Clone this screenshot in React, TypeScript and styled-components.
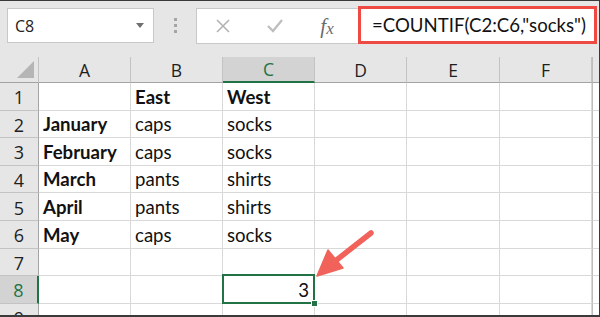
import React from "react";
import styled, { createGlobalStyle } from "styled-components";

const GREEN = "#217346";

const columns = ["A", "B", "C", "D", "E", "F"];

const rows: { a?: string; b?: string; c?: string }[] = [
  { b: "East", c: "West" },
  { a: "January", b: "caps", c: "socks" },
  { a: "February", b: "caps", c: "socks" },
  { a: "March", b: "pants", c: "shirts" },
  { a: "April", b: "pants", c: "shirts" },
  { a: "May", b: "caps", c: "socks" },
  {},
  { c: "3" },
  {},
];

const App = () => {
  return (
    <Window>
      <GlobalStyle />
      <FormulaBar>
        <NameBox>
          <span>C8</span>
          <Caret />
        </NameBox>
        <Dots>
          <i />
          <i />
          <i />
        </Dots>
        <FormulaBox>
          <IconSlot>
            <svg width="14" height="14" viewBox="0 0 14 14">
              <path d="M1 1 L13 13 M13 1 L1 13" stroke="#b3b3b3" strokeWidth="1.6" fill="none" />
            </svg>
          </IconSlot>
          <IconSlot>
            <svg width="16" height="14" viewBox="0 0 16 14">
              <path d="M1 7 L6 12 L15 1" stroke="#bdbdbd" strokeWidth="2.2" fill="none" />
            </svg>
          </IconSlot>
          <IconSlot>
            <Fx>
              f<sub>x</sub>
            </Fx>
          </IconSlot>
          <FormulaInput>=COUNTIF(C2:C6,"socks")</FormulaInput>
        </FormulaBox>
      </FormulaBar>

      <Sheet>
        <Corner />
        {columns.map((c) => (
          <ColHeader key={c} $active={c === "C"}>
            {c}
          </ColHeader>
        ))}
        <Filler $head />

        {rows.map((r, i) => {
          const n = i + 1;
          return (
            <React.Fragment key={n}>
              <RowHeader $active={n === 8}>{n}</RowHeader>
              <Cell $bold>{r.a}</Cell>
              <Cell $bold={n === 1}>{r.b}</Cell>
              <Cell $bold={n === 1} $right={n === 8} $selected={n === 8}>
                {r.c}
              </Cell>
              <Cell />
              <Cell />
              <Cell />
              <Filler />
            </React.Fragment>
          );
        })}
      </Sheet>

      <Arrow viewBox="0 0 600 317" width="600" height="317">
        <line x1="371" y1="233" x2="334" y2="262" stroke="#f1635a" strokeWidth="5.5" strokeLinecap="round" />
        <polygon points="317,276 328,250 343,268" fill="#f1635a" stroke="#f1635a" strokeWidth="1.5" strokeLinejoin="round" />
      </Arrow>
    </Window>
  );
};

export default App;

const GlobalStyle = createGlobalStyle`
  html, body {
    margin: 0;
    padding: 0;
    background: #fff;
  }
`;

const Window = styled.div`
  position: relative;
  width: 600px;
  height: 317px;
  box-sizing: border-box;
  overflow: hidden;
  background: #e6e6e6;
  border-top: 1px solid #3a3a3a;
  border-right: 1px solid #3a3a3a;
  border-bottom: 2px solid #3a3a3a;
  font-family: "Open Sans", "Noto Sans", sans-serif;
`;

const FormulaBar = styled.div`
  display: flex;
  align-items: flex-start;
  height: 56px;
  padding: 7px 2px 0 7px;
  box-sizing: border-box;
`;

const NameBox = styled.div`
  display: flex;
  align-items: center;
  justify-content: space-between;
  width: 147px;
  height: 35px;
  box-sizing: border-box;
  padding: 0 9px 0 7px;
  background: #fff;
  border: 1px solid #c8c8c8;
  font-size: 16px;
  color: #222;
`;

const Caret = styled.div`
  width: 0;
  height: 0;
  border-left: 4px solid transparent;
  border-right: 4px solid transparent;
  border-top: 5px solid #6f6f6f;
`;

const Dots = styled.div`
  display: flex;
  flex-direction: column;
  align-items: center;
  gap: 3px;
  width: 42px;
  padding-top: 10px;

  i {
    display: block;
    width: 3px;
    height: 3px;
    background: #a5a5a5;
  }
`;

const FormulaBox = styled.div`
  flex: 1;
  display: flex;
  align-items: stretch;
  height: 36px;
  box-sizing: border-box;
  background: #fff;
  border: 1px solid #c8c8c8;
`;

const IconSlot = styled.div`
  display: flex;
  align-items: center;
  justify-content: center;
  width: 52px;
`;

const Fx = styled.span`
  font-family: "Liberation Serif", serif;
  font-style: italic;
  font-size: 21px;
  color: #6b6b6b;
  line-height: 1;

  sub {
    font-size: 17px;
    vertical-align: -1px;
  }
`;

const FormulaInput = styled.div`
  flex: 1;
  display: flex;
  align-items: center;
  margin: -3px -1px -1px 5px;
  padding-left: 11px;
  border: 3px solid #ee4a43;
  font-family: "Lato", sans-serif;
  font-size: 18.6px;
  color: #111;
  white-space: nowrap;
`;

const Sheet = styled.div`
  display: grid;
  grid-template-columns: 39px 92px 92px 92px 92px 93px 92px 1fr;
  grid-template-rows: 26px repeat(9, 27.6px);
`;

const Corner = styled.div`
  position: relative;
  border-right: 1px solid #c3c3c3;
  border-bottom: 1px solid #a3a3a3;

  &::after {
    content: "";
    position: absolute;
    right: 4px;
    bottom: 4px;
    width: 0;
    height: 0;
    border-left: 17px solid transparent;
    border-bottom: 17px solid #b5b5b5;
  }
`;

const ColHeader = styled.div<{ $active?: boolean }>`
  display: flex;
  align-items: center;
  justify-content: center;
  background: ${(p) => (p.$active ? "#d3d3d3" : "#e6e6e6")};
  border-right: 1px solid #c3c3c3;
  border-bottom: ${(p) => (p.$active ? `2px solid ${GREEN}` : "1px solid #a3a3a3")};
  color: ${(p) => (p.$active ? GREEN : "#1e1e1e")};
  font-size: 17.5px;
`;

const RowHeader = styled.div<{ $active?: boolean }>`
  display: flex;
  align-items: center;
  justify-content: center;
  background: ${(p) => (p.$active ? "#d3d3d3" : "#e6e6e6")};
  border-bottom: 1px solid #c3c3c3;
  border-right: ${(p) => (p.$active ? `2px solid ${GREEN}` : "1px solid #a3a3a3")};
  color: ${(p) => (p.$active ? GREEN : "#1e1e1e")};
  font-size: 18px;
  padding-top: 2px;
`;

const Cell = styled.div<{ $bold?: boolean; $right?: boolean; $selected?: boolean }>`
  position: relative;
  display: flex;
  align-items: flex-end;
  justify-content: ${(p) => (p.$right ? "flex-end" : "flex-start")};
  padding: 0 5px 3px 4px;
  background: #fff;
  border-right: 1px solid #d9d9d9;
  border-bottom: 1px solid #d9d9d9;
  font-family: "Lato", sans-serif;
  font-size: 18.6px;
  line-height: 19px;
  font-weight: ${(p) => (p.$bold ? 700 : 400)};
  color: #111;
  white-space: nowrap;

  ${(p) =>
    p.$selected &&
    `
    &::after {
      content: "";
      position: absolute;
      top: -2px;
      left: -1px;
      right: -1px;
      bottom: -1px;
      border: 2px solid ${GREEN};
    }
    &::before {
      content: "";
      position: absolute;
      z-index: 2;
      right: -4px;
      bottom: -4px;
      width: 5px;
      height: 5px;
      background: ${GREEN};
      border: 1px solid #fff;
    }
  `}
`;

const Filler = styled.div<{ $head?: boolean }>`
  background: ${(p) => (p.$head ? "#e6e6e6" : "#fff")};
  border-left: 1px solid #bdbdbd;
  border-bottom: 1px solid ${(p) => (p.$head ? "#a3a3a3" : "#d9d9d9")};
`;

const Arrow = styled.svg`
  position: absolute;
  top: -1px;
  left: 0;
  pointer-events: none;
`;
